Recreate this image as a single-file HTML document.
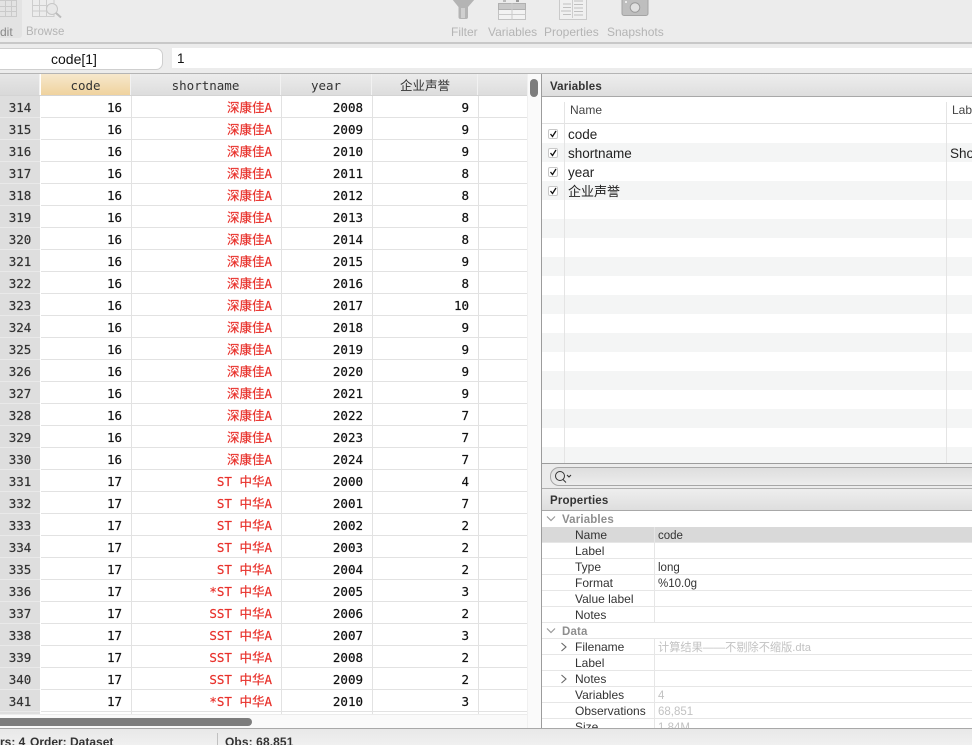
<!DOCTYPE html>
<html><head><meta charset="utf-8">
<style>
html,body{margin:0;padding:0;background:#fff}
#p{position:relative;width:972px;height:745px;overflow:hidden;background:#fff;font-family:"Liberation Sans","Noto Sans CJK SC",sans-serif;color:#222}
#p div,#p svg{position:absolute}
.tb{font-size:12px;color:#b4b4b4;top:25px;white-space:pre}
.r{left:0;width:527px;height:22px;border-bottom:0}
.c{top:0;height:21px;font:12.5px/24px "DejaVu Sans Mono","Noto Sans CJK SC",monospace;text-align:right;white-space:pre;color:#111;background:#fff;border-bottom:1px solid #e2e2e2;border-right:1px solid #e2e2e2;box-sizing:content-box;-webkit-text-stroke:.2px}
.h{left:0;width:40px;background:#dedede;color:#333;text-align:center;padding:0;border-bottom:1px solid #e9e9e9;border-right:0}
.a{left:41px;width:81px;padding-right:9px}
.b{left:132px;width:140px;padding-right:9px;color:#e8302a}
.y{left:282px;width:81px;padding-right:9px}
.v{left:373px;width:96px;padding-right:9px}
.e{left:479px;width:48px;border-right:0}
.hd{top:74px;height:22px;background:linear-gradient(#ececec,#dcdcdc);font:12.5px/24px "DejaVu Sans Mono","Noto Sans CJK SC",monospace;text-align:center;color:#333;border-right:1px solid #f2f2f2;box-sizing:border-box}
.vn{left:568px;font-size:13.5px;line-height:19px;color:#222;white-space:pre}
.chk{left:548px;width:8px;height:8px;border:1px solid #c8c8c8;border-radius:2px;background:#fff}
.alt{left:542px;width:430px;height:19px;background:#f4f5f5}
.pl{left:575px;font-size:12px;line-height:18px;color:#333;white-space:pre}
.pv{left:658px;font-size:11.500px;line-height:20px;color:#333;white-space:pre}
.gr{color:#c2c2c2}
.pr{left:542px;width:430px;height:1px;background:#e6e6e6}
.sec{left:562px;font-size:11.500px;letter-spacing:.15px;font-weight:bold;line-height:18px;color:#8e8e8e}
.ti{left:550px;font-size:11.500px;letter-spacing:.15px;font-weight:bold;line-height:18px;color:#333}
.st{top:733px;font-size:12px;font-weight:bold;line-height:18px;color:#333;white-space:pre}
</style></head><body><div id="p">

<div style="left:0;top:0;width:972px;height:42px;background:#ececec"></div>
<div style="left:0;top:0;width:22px;height:38px;background:#e3e3e3;border-radius:0 0 3px 0"></div>
<div style="left:0;top:42px;width:972px;height:2px;background:#c8c8c8"></div>
<div style="left:0;top:44px;width:972px;height:29px;background:#ececec"></div>
<div style="left:0;top:73px;width:972px;height:1px;background:#b4b4b4"></div>

<svg style="left:0;top:0" width="22" height="18" fill="none" stroke="#cacaca"><path d="M-1 .5H16.5V16.5H-1M-1 6.5H16.5M-1 11.500H16.500M5.500 0V17M11.500 0V17"/></svg>
<svg style="left:31px;top:0" width="33" height="20" fill="none"><path d="M1.500 -1V16.500H23V-1H1.500M1.500 5.500H23M1.500 11H23M8.500 0V16.500M15.500 0V16.500" stroke="#cdcdcd"/><circle cx="21" cy="9" r="5.500" fill="#e8e8e8" stroke="#c6c6c6"/><path d="M25 13L30 17.500" stroke="#bcbcbc" stroke-width="2"/></svg>
<svg style="left:450px;top:0" width="28" height="20"><path d="M2 -1L8.500 7V17Q8.500 19 10.500 19H16Q18 19 18 17V7L25 -1Z" fill="#b4b4b4"/><path d="M11 8V18H15V8Z" fill="#cfcfcf"/></svg>
<svg style="left:497px;top:0" width="30" height="21" fill="none"><rect x="1.500" y="3.500" width="27" height="16" fill="#f2f2f2" stroke="#c2c2c2"/><rect x="1.500" y="3.500" width="27" height="6" fill="#c8c8c8" stroke="#b0b0b0"/><path d="M1.500 14.500H28.500M15 3V20" stroke="#cbcbcb"/><rect x="6" y="0" width="3" height="2" fill="#bbb"/><rect x="19" y="0" width="3" height="2" fill="#999"/></svg>
<svg style="left:558px;top:0" width="30" height="21" fill="none"><rect x="1.500" y="-2" width="27" height="21.500" fill="#f0f0f0" stroke="#cacaca"/><path d="M5 4H13M5 7.500H13M3 11H13M5 14.500H13M16 1H25M16 4.500H25M16 8H25M16 11.500H25M16 15H25" stroke="#c0c0c0"/><path d="M14.500 0V18" stroke="#cdcdcd"/></svg>
<svg style="left:620px;top:0" width="30" height="17"><rect x="2" y="-4" width="26" height="19.500" rx="2" fill="#bebebe" stroke="#a4a4a4"/><circle cx="15" cy="7.500" r="4.800" fill="#e0e0e0" stroke="#9a9a9a"/><rect x="5" y="1" width="2" height="2" fill="#eaeaea"/></svg>

<div class="tb" style="left:0;color:#888">dit</div>
<div class="tb" style="left:26px;top:26px;font-size:11.500px">Browse</div>
<div class="tb" style="left:451px">Filter</div>
<div class="tb" style="left:488px">Variables</div>
<div class="tb" style="left:544px">Properties</div>
<div class="tb" style="left:607px">Snapshots</div>

<div style="left:-10px;top:48px;width:171px;height:20px;background:#fff;border:1px solid #cfcfcf;border-radius:7px;box-sizing:content-box;font-size:14px;line-height:20px;color:#111"><div style="left:60px;top:0">code[1]</div></div>
<div style="left:172px;top:48px;width:800px;height:20px;background:#fff;font-size:13.500px;line-height:21px;color:#111"><div style="left:5px;top:0">1</div></div>

<div class="hd" style="left:0;width:40px;background:linear-gradient(#e6e6e6,#d8d8d8)"></div>
<div class="hd" style="left:41px;width:90px;background:linear-gradient(#f6e8cc,#efd29c)">code</div>
<div class="hd" style="left:131px;width:150px">shortname</div>
<div class="hd" style="left:281px;width:91px">year</div>
<div class="hd" style="left:372px;width:106px;text-align:left;padding-left:28px">企业声誉</div>
<div class="hd" style="left:478px;width:49px;border:0"></div>
<div style="left:0;top:95px;width:527px;height:1px;background:#d4d4d4"></div>

<div class="r" style="top:96px"><div class="c h">314</div><div class="c a">16</div><div class="c b">深康佳A</div><div class="c y">2008</div><div class="c v">9</div><div class="c e"></div></div>
<div class="r" style="top:118px"><div class="c h">315</div><div class="c a">16</div><div class="c b">深康佳A</div><div class="c y">2009</div><div class="c v">9</div><div class="c e"></div></div>
<div class="r" style="top:140px"><div class="c h">316</div><div class="c a">16</div><div class="c b">深康佳A</div><div class="c y">2010</div><div class="c v">9</div><div class="c e"></div></div>
<div class="r" style="top:162px"><div class="c h">317</div><div class="c a">16</div><div class="c b">深康佳A</div><div class="c y">2011</div><div class="c v">8</div><div class="c e"></div></div>
<div class="r" style="top:184px"><div class="c h">318</div><div class="c a">16</div><div class="c b">深康佳A</div><div class="c y">2012</div><div class="c v">8</div><div class="c e"></div></div>
<div class="r" style="top:206px"><div class="c h">319</div><div class="c a">16</div><div class="c b">深康佳A</div><div class="c y">2013</div><div class="c v">8</div><div class="c e"></div></div>
<div class="r" style="top:228px"><div class="c h">320</div><div class="c a">16</div><div class="c b">深康佳A</div><div class="c y">2014</div><div class="c v">8</div><div class="c e"></div></div>
<div class="r" style="top:250px"><div class="c h">321</div><div class="c a">16</div><div class="c b">深康佳A</div><div class="c y">2015</div><div class="c v">9</div><div class="c e"></div></div>
<div class="r" style="top:272px"><div class="c h">322</div><div class="c a">16</div><div class="c b">深康佳A</div><div class="c y">2016</div><div class="c v">8</div><div class="c e"></div></div>
<div class="r" style="top:294px"><div class="c h">323</div><div class="c a">16</div><div class="c b">深康佳A</div><div class="c y">2017</div><div class="c v">10</div><div class="c e"></div></div>
<div class="r" style="top:316px"><div class="c h">324</div><div class="c a">16</div><div class="c b">深康佳A</div><div class="c y">2018</div><div class="c v">9</div><div class="c e"></div></div>
<div class="r" style="top:338px"><div class="c h">325</div><div class="c a">16</div><div class="c b">深康佳A</div><div class="c y">2019</div><div class="c v">9</div><div class="c e"></div></div>
<div class="r" style="top:360px"><div class="c h">326</div><div class="c a">16</div><div class="c b">深康佳A</div><div class="c y">2020</div><div class="c v">9</div><div class="c e"></div></div>
<div class="r" style="top:382px"><div class="c h">327</div><div class="c a">16</div><div class="c b">深康佳A</div><div class="c y">2021</div><div class="c v">9</div><div class="c e"></div></div>
<div class="r" style="top:404px"><div class="c h">328</div><div class="c a">16</div><div class="c b">深康佳A</div><div class="c y">2022</div><div class="c v">7</div><div class="c e"></div></div>
<div class="r" style="top:426px"><div class="c h">329</div><div class="c a">16</div><div class="c b">深康佳A</div><div class="c y">2023</div><div class="c v">7</div><div class="c e"></div></div>
<div class="r" style="top:448px"><div class="c h">330</div><div class="c a">16</div><div class="c b">深康佳A</div><div class="c y">2024</div><div class="c v">7</div><div class="c e"></div></div>
<div class="r" style="top:470px"><div class="c h">331</div><div class="c a">17</div><div class="c b">ST 中华A</div><div class="c y">2000</div><div class="c v">4</div><div class="c e"></div></div>
<div class="r" style="top:492px"><div class="c h">332</div><div class="c a">17</div><div class="c b">ST 中华A</div><div class="c y">2001</div><div class="c v">7</div><div class="c e"></div></div>
<div class="r" style="top:514px"><div class="c h">333</div><div class="c a">17</div><div class="c b">ST 中华A</div><div class="c y">2002</div><div class="c v">2</div><div class="c e"></div></div>
<div class="r" style="top:536px"><div class="c h">334</div><div class="c a">17</div><div class="c b">ST 中华A</div><div class="c y">2003</div><div class="c v">2</div><div class="c e"></div></div>
<div class="r" style="top:558px"><div class="c h">335</div><div class="c a">17</div><div class="c b">ST 中华A</div><div class="c y">2004</div><div class="c v">2</div><div class="c e"></div></div>
<div class="r" style="top:580px"><div class="c h">336</div><div class="c a">17</div><div class="c b">*ST 中华A</div><div class="c y">2005</div><div class="c v">3</div><div class="c e"></div></div>
<div class="r" style="top:602px"><div class="c h">337</div><div class="c a">17</div><div class="c b">SST 中华A</div><div class="c y">2006</div><div class="c v">2</div><div class="c e"></div></div>
<div class="r" style="top:624px"><div class="c h">338</div><div class="c a">17</div><div class="c b">SST 中华A</div><div class="c y">2007</div><div class="c v">3</div><div class="c e"></div></div>
<div class="r" style="top:646px"><div class="c h">339</div><div class="c a">17</div><div class="c b">SST 中华A</div><div class="c y">2008</div><div class="c v">2</div><div class="c e"></div></div>
<div class="r" style="top:668px"><div class="c h">340</div><div class="c a">17</div><div class="c b">SST 中华A</div><div class="c y">2009</div><div class="c v">2</div><div class="c e"></div></div>
<div class="r" style="top:690px"><div class="c h">341</div><div class="c a">17</div><div class="c b">*ST 中华A</div><div class="c y">2010</div><div class="c v">3</div><div class="c e"></div></div>
<div class="r" style="top:712px"><div class="c h"></div><div class="c a"></div><div class="c b"></div><div class="c y"></div><div class="c v"></div><div class="c e"></div></div>

<div style="left:0;top:714px;width:527px;height:14px;background:#fafafa;border-top:1px solid #ececec;box-sizing:border-box"></div>
<div style="left:-10px;top:718px;width:262px;height:8px;background:#7d7d7d;border-radius:4px"></div>
<div style="left:527px;top:74px;width:14px;height:654px;background:#fafafa;border-left:1px solid #f0f0f0;box-sizing:border-box"></div>
<div style="left:530px;top:79px;width:8px;height:18px;background:#7d7d7d;border-radius:4px"></div>

<div style="left:541px;top:74px;width:1px;height:655px;background:#9c9c9c"></div>
<div style="left:542px;top:74px;width:430px;height:22px;background:linear-gradient(#eeeeee,#dedede)"></div>
<div style="left:542px;top:96px;width:430px;height:1px;background:#a8a8a8"></div>
<div class="ti" style="top:78px">Variables</div>
<div style="left:542px;top:123px;width:430px;height:1px;background:#e2e2e2"></div>
<div style="left:570px;top:101px;font-size:12px;line-height:18px;color:#444">Name</div>
<div style="left:952px;top:101px;font-size:12px;line-height:18px;color:#444">Label</div>

<div class="alt" style="top:143px"></div>
<div class="alt" style="top:181px"></div>
<div class="alt" style="top:219px"></div>
<div class="alt" style="top:257px"></div>
<div class="alt" style="top:295px"></div>
<div class="alt" style="top:333px"></div>
<div class="alt" style="top:371px"></div>
<div class="alt" style="top:409px"></div>
<div class="alt" style="top:447px;height:16px"></div>
<div style="left:564px;top:102px;width:1px;height:361px;background:#e4e4e4"></div>
<div style="left:946px;top:102px;width:1px;height:361px;background:#e4e4e4"></div>

<div class="chk" style="top:129px"><svg style="left:0;top:0" width="8" height="8" fill="none" stroke="#111" stroke-width="1.300"><path d="M1.500 4L3.500 6.500L7 1"/></svg></div>
<div class="chk" style="top:148px"><svg style="left:0;top:0" width="8" height="8" fill="none" stroke="#111" stroke-width="1.300"><path d="M1.500 4L3.500 6.500L7 1"/></svg></div>
<div class="chk" style="top:167px"><svg style="left:0;top:0" width="8" height="8" fill="none" stroke="#111" stroke-width="1.300"><path d="M1.500 4L3.500 6.500L7 1"/></svg></div>
<div class="chk" style="top:186px"><svg style="left:0;top:0" width="8" height="8" fill="none" stroke="#111" stroke-width="1.300"><path d="M1.500 4L3.500 6.500L7 1"/></svg></div>
<div class="vn" style="top:125px">code</div>
<div class="vn" style="top:144px">shortname</div>
<div class="vn" style="top:163px">year</div>
<div class="vn" style="top:182px;font-size:13px">企业声誉</div>
<div class="vn" style="left:950px;top:144px">Short</div>

<div style="left:542px;top:463px;width:430px;height:1px;background:#9c9c9c"></div>
<div style="left:542px;top:464px;width:430px;height:25px;background:#ececec"></div>
<div style="left:550px;top:467px;width:430px;height:19px;background:linear-gradient(#dedede,#ececec);border:1px solid #a6a6a6;border-radius:9px;box-sizing:border-box"></div>
<svg style="left:552px;top:469px" width="22" height="15" fill="none" stroke="#333"><circle cx="8" cy="7" r="4.500"/><path d="M11 10.500L14 13.500"/><path d="M15 6L17 8L19 6" stroke-width="1.100"/></svg>
<div style="left:542px;top:488px;width:430px;height:1px;background:#b0b0b0"></div>

<div style="left:542px;top:489px;width:430px;height:21px;background:linear-gradient(#eeeeee,#dedede)"></div>
<div style="left:542px;top:510px;width:430px;height:1px;background:#a8a8a8"></div>
<div class="ti" style="top:492px">Properties</div>

<div style="left:542px;top:527px;width:430px;height:16px;background:#d9d9d9"></div>
<div style="left:654px;top:527px;width:1px;height:96px;background:#e6e6e6"></div>
<div style="left:654px;top:639px;width:1px;height:90px;background:#e6e6e6"></div>
<div class="pr" style="top:558px"></div>
<div class="pr" style="top:574px"></div>
<div class="pr" style="top:590px"></div>
<div class="pr" style="top:606px"></div>
<div class="pr" style="top:622px"></div>
<div class="pr" style="top:638px"></div>
<div class="pr" style="top:654px"></div>
<div class="pr" style="top:670px"></div>
<div class="pr" style="top:686px"></div>
<div class="pr" style="top:702px"></div>
<div class="pr" style="top:718px"></div>
<div class="pr" style="top:542px"></div>

<svg style="left:546px;top:515px" width="11" height="8" fill="none" stroke="#9a9a9a" stroke-width="1.200"><path d="M1 1.500L5 5.500L9 1.500"/></svg>
<svg style="left:546px;top:627px" width="11" height="8" fill="none" stroke="#9a9a9a" stroke-width="1.200"><path d="M1 1.500L5 5.500L9 1.500"/></svg>
<svg style="left:560px;top:642px" width="8" height="11" fill="none" stroke="#666" stroke-width="1.100"><path d="M1.500 1L6 5L1.500 9"/></svg>
<svg style="left:560px;top:674px" width="8" height="11" fill="none" stroke="#666" stroke-width="1.100"><path d="M1.500 1L6 5L1.500 9"/></svg>

<div class="sec" style="top:511px">Variables</div>
<div class="pl" style="top:526px">Name</div><div class="pv" style="top:526px">code</div>
<div class="pl" style="top:542px">Label</div>
<div class="pl" style="top:558px">Type</div><div class="pv" style="top:558px">long</div>
<div class="pl" style="top:574px">Format</div><div class="pv" style="top:574px">%10.0g</div>
<div class="pl" style="top:590px">Value label</div>
<div class="pl" style="top:606px">Notes</div>
<div class="sec" style="top:623px">Data</div>
<div class="pl" style="top:638px">Filename</div><div class="pv gr" style="top:638px;font-size:11.200px">计算结果——不剔除不缩版.dta</div>
<div class="pl" style="top:654px">Label</div>
<div class="pl" style="top:670px">Notes</div>
<div class="pl" style="top:686px">Variables</div><div class="pv gr" style="top:686px">4</div>
<div class="pl" style="top:702px">Observations</div><div class="pv gr" style="top:702px">68,851</div>
<div class="pl" style="top:718px">Size</div><div class="pv gr" style="top:718px">1.84M</div>

<div style="left:0;top:728px;width:972px;height:17px;background:linear-gradient(#e8e8e8,#f0f0f0);border-top:1px solid #a8a8a8;box-sizing:border-box"></div>
<div class="st" style="left:0">rs: 4</div>
<div class="st" style="left:30px">Order: Dataset</div>
<div style="left:217px;top:733px;width:1px;height:12px;background:#c0c0c0"></div>
<div class="st" style="left:225px;letter-spacing:.1px">Obs: 68,851</div>

</div></body></html>
